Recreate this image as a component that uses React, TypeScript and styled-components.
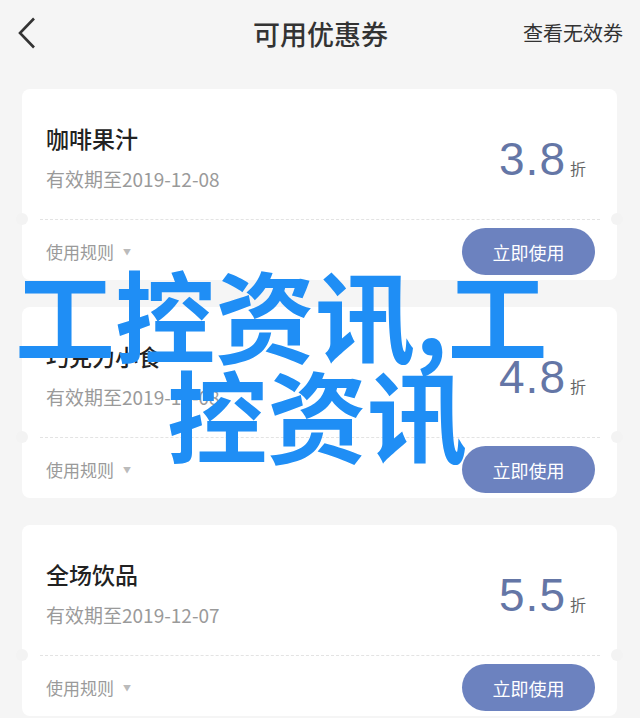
import React from 'react';
import styled, { createGlobalStyle } from 'styled-components';

const GlobalStyle = createGlobalStyle`
  html, body { margin: 0; padding: 0; background: #f5f5f5; }
  body { font-family: "Noto Sans CJK SC", "Noto Sans", sans-serif; }
  * { box-sizing: border-box; }
`;

const Page = styled.div`
  position: relative;
  width: 640px;
  height: 718px;
  overflow: hidden;
  background: #f5f5f5;
`;

const Header = styled.header`
  display: grid;
  grid-template-columns: 1fr auto 1fr;
  align-items: center;
  height: 66px;
  padding: 0 17px 0 18px;
`;

const BackButton = styled.button`
  justify-self: start;
  display: flex;
  background: none;
  border: 0;
  padding: 0;
  cursor: pointer;
`;

const Title = styled.h1`
  margin: 0;
  font-size: 27px;
  font-weight: 500;
  color: #333;
  line-height: 1;
`;

const HeaderLink = styled.a`
  justify-self: end;
  font-size: 20px;
  color: #333;
  line-height: 1;
  text-decoration: none;
`;

const List = styled.main`
  display: flex;
  flex-direction: column;
  gap: 27px;
  padding: 23px 23px 0 22px;
`;

const Card = styled.section`
  position: relative;
  flex: none;
  height: 191px;
  background: #fff;
  border-radius: 8px;
  display: flex;
  flex-direction: column;
  &::before,
  &::after {
    content: '';
    position: absolute;
    top: 124px;
    width: 12px;
    height: 12px;
    border-radius: 50%;
    background: #f3f3f3;
  }
  &::before { left: -6px; }
  &::after { right: -6px; }
`;

const CardTop = styled.div`
  height: 130px;
  display: flex;
  justify-content: space-between;
  padding: 0 31px 0 24px;
`;

const Info = styled.div`
  display: flex;
  flex-direction: column;
  padding-top: 37px;
`;

const Name = styled.h2`
  margin: 0;
  font-size: 23px;
  line-height: 24px;
  font-weight: 500;
  color: #222;
`;

const Expiry = styled.p`
  margin: 20px 0 0;
  font-size: 19px;
  line-height: 18px;
  color: #9a9a9a;
`;

const Discount = styled.div`
  display: flex;
  align-items: baseline;
  padding-top: 48px;
`;

const Value = styled.span`
  font-family: "Liberation Sans", Arial, sans-serif;
  font-size: 46px;
  line-height: 44px;
  letter-spacing: 1px;
  color: #6476a6;
`;

const Unit = styled.span`
  margin-left: 4px;
  font-size: 16px;
  color: #666;
`;

const Divider = styled.div`
  height: 0;
  margin: 0 17px 0 18px;
  border-top: 1px dashed #e3e3e3;
`;

const CardBottom = styled.div`
  display: flex;
  justify-content: space-between;
  align-items: center;
  padding: 8px 22px 0 24px;
`;

const Rules = styled.span`
  display: flex;
  align-items: center;
  font-size: 17px;
  line-height: 1;
  color: #9a9a9a;
`;

const Caret = styled.span`
  margin-left: 9px;
  font-size: 8px;
  color: #bbb;
`;

const UseButton = styled.button`
  width: 133px;
  height: 47px;
  border: 0;
  border-radius: 24px;
  background: #6c82bf;
  color: #fff;
  font-family: inherit;
  font-size: 18px;
  cursor: pointer;
`;

const Watermark = styled.div`
  position: absolute;
  top: 263px;
  left: 0;
  width: 640px;
  pointer-events: none;
  font-family: "Noto Sans CJK SC", sans-serif;
  font-size: 100px;
  line-height: 100px;
  font-weight: 700;
  color: #1f8ef5;
  white-space: nowrap;
`;

const WatermarkLine = styled.div<{ $indent: number }>`
  padding-left: ${(p) => p.$indent}px;
`;

const coupons = [
  { name: '咖啡果汁', date: '2019-12-08', value: '3.8' },
  { name: '巧克力小食', date: '2019-12-08', value: '4.8' },
  { name: '全场饮品', date: '2019-12-07', value: '5.5' },
];

export default function App() {
  return (
    <Page>
      <GlobalStyle />
      <Header>
        <BackButton aria-label="返回">
          <svg width="18" height="32" viewBox="0 0 18 32">
            <polyline points="16,1.5 2,16 16,30.5" fill="none" stroke="#333" strokeWidth="2.6" />
          </svg>
        </BackButton>
        <Title>可用优惠券</Title>
        <HeaderLink href="#">查看无效券</HeaderLink>
      </Header>
      <List>
        {coupons.map((c) => (
          <Card key={c.name}>
            <CardTop>
              <Info>
                <Name>{c.name}</Name>
                <Expiry>有效期至{c.date}</Expiry>
              </Info>
              <Discount>
                <Value>{c.value}</Value>
                <Unit>折</Unit>
              </Discount>
            </CardTop>
            <Divider />
            <CardBottom>
              <Rules>
                使用规则<Caret>▼</Caret>
              </Rules>
              <UseButton>立即使用</UseButton>
            </CardBottom>
          </Card>
        ))}
      </List>
      <Watermark>
        <WatermarkLine $indent={15}>工控资讯,工</WatermarkLine>
        <WatermarkLine $indent={167}>控资讯</WatermarkLine>
      </Watermark>
    </Page>
  );
}
